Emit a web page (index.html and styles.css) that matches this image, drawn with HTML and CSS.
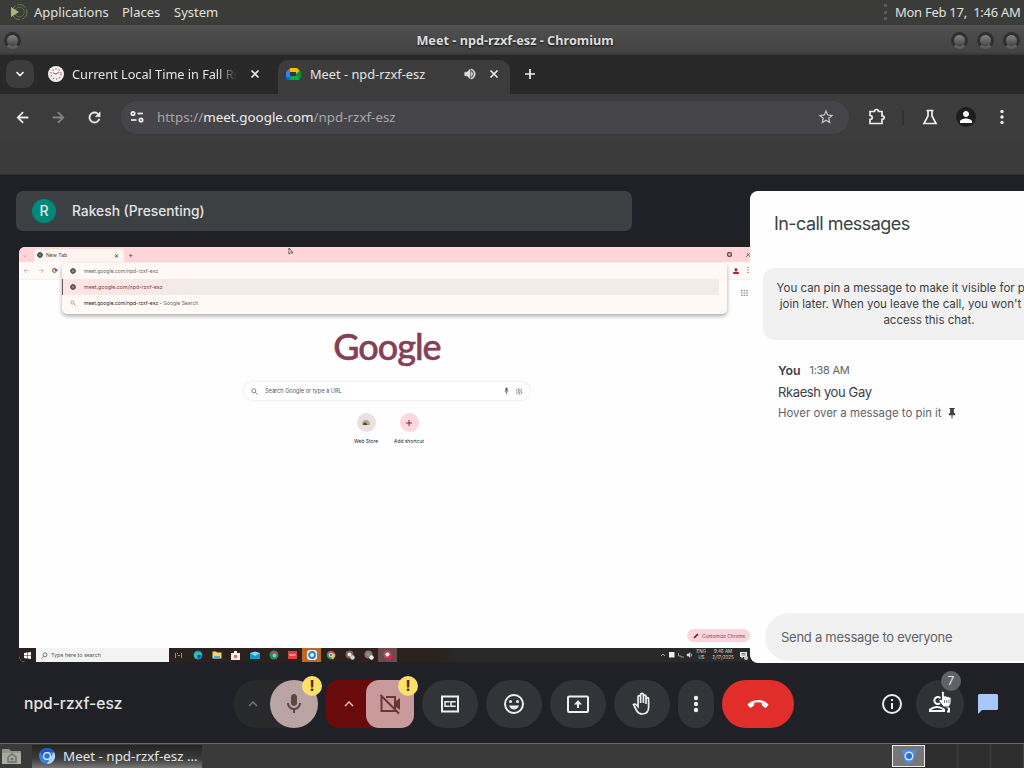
FILE: index.html
```html
<!DOCTYPE html>
<html lang="en">
<head>
    <meta charset="utf-8">
    <title>Meet - npd-rzxf-esz</title>
    <link rel="stylesheet" href="styles.css">
</head>
<body>

<!-- desktop panel -->
<div class="panel">
    <svg class="menu-logo" width="20" height="20" viewBox="0 0 20 20"><circle cx="10.500" cy="10" r="7.500" fill="none" stroke="#6d8148" stroke-dasharray="9 2"/><circle cx="10.500" cy="10" r="4.800" fill="none" stroke="#5c6e40"/><path d="M2 5v10l8-5z" fill="#a9b878"/></svg>
    <span class="apps">Applications</span>
    <span class="places">Places</span>
    <span class="system">System</span>
    <span class="grip"></span>
    <span class="clock">Mon Feb 17,&nbsp; 1:46 AM</span>
</div>

<div class="titlebar">
    <span class="knob"></span>
    <span class="window-title"><b>Meet - npd-rzxf-esz - Chromium</b></span>
    <span class="knob"></span>
    <span class="knob"></span>
    <span class="knob"></span>
</div>

<div class="tabstrip">
    <div class="tab-search"><svg width="12" height="12" viewBox="0 0 12 12"><path d="M2.500 4l3.500 3.500L9.500 4" class="line"/></svg></div>
    <div class="tab">
        <svg width="16" height="16" viewBox="0 0 16 16"><circle cx="8" cy="8" r="8" fill="#f4f2f2"/><circle cx="8" cy="8" r="5" fill="none" stroke="#a86b6b" stroke-width="1.500" stroke-dasharray="1.200 2"/><path d="M8 8l3-2M8 8L5 7" stroke="#c44" /></svg>
        <span class="tab-title faded">Current Local Time in Fall Ri</span>
        <svg class="close" width="10" height="10" viewBox="0 0 10 10"><path d="M1.500 1.500l7 7M8.500 1.500l-7 7" class="line"/></svg>
    </div>
    <div class="tab active">
        <svg width="16" height="16" viewBox="0 0 16 16"><path d="M0 6l4-4v4z" fill="#ea4335"/><path d="M4 2h7l2 2v3l-3 1V6H4z" fill="#fbbc04"/><path d="M0 6h4v5H0z" fill="#2684fc"/><path d="M0 11h4v3H2q-2 0-2-2z" fill="#0066da"/><path d="M4 10h6V8l3 2v4H4z" fill="#00ac47"/><path d="M4 6h6v4H4z" fill="#24384a"/><path d="M10 8l5-4v9l-5-4z" fill="#0c8a3a"/></svg>
        <span class="tab-title">Meet - npd-rzxf-esz</span>
        <svg width="14" height="14" viewBox="0 0 24 24" fill="#ddd" stroke="#ddd"><path d="M3 9v6h4l5 5V4L7 9H3zm13.500 3c0-1.770-1.020-3.290-2.500-4.030v8.050c1.480-.730 2.500-2.250 2.500-4.020zM14 3.230v2.060c2.890.860 5 3.540 5 6.710s-2.110 5.850-5 6.710v2.060c4.010-.910 7-4.490 7-8.770s-2.990-7.860-7-8.770z"/></svg>
        <svg class="close" width="10" height="10" viewBox="0 0 10 10"><path d="M1.500 1.500l7 7M8.500 1.500l-7 7" class="line"/></svg>
    </div>
    <svg class="new-tab" width="12" height="12" viewBox="0 0 12 12"><path d="M6 1v10M1 6h10" class="line"/></svg>
</div>

<div class="toolbar">
    <svg class="nav" viewBox="0 0 24 24"><path d="M20 11H7.830l5.590-5.590L12 4l-8 8 8 8 1.410-1.410L7.830 13H20v-2z"/></svg>
    <svg class="nav dim flip" viewBox="0 0 24 24"><path d="M20 11H7.830l5.590-5.590L12 4l-8 8 8 8 1.410-1.410L7.830 13H20v-2z"/></svg>
    <svg class="nav" viewBox="0 0 24 24"><path d="M17.650 6.350C16.200 4.900 14.210 4 12 4c-4.420 0-7.990 3.580-7.990 8s3.570 8 7.990 8c3.730 0 6.840-2.550 7.730-6h-2.080c-.820 2.330-3.040 4-5.650 4-3.310 0-6-2.690-6-6s2.690-6 6-6c1.660 0 3.140.690 4.220 1.780L13 11h7V4l-2.350 2.350z"/></svg>
    <div class="omnibox">
        <svg width="16" height="16" viewBox="0 0 16 16"><g class="line"><circle cx="4" cy="4.500" r="1.700"/><path d="M8.500 4.500H14"/><circle cx="12" cy="11" r="1.700"/><path d="M2 11h5.500"/></g></svg>
        <span class="url">https://<em>meet.google.com</em>/npd-rzxf-esz</span>
        <svg width="18" height="18" viewBox="0 0 24 24" fill="#c7c7ca"><path d="M22 9.240l-7.190-.620L12 2 9.190 8.630 2 9.240l5.460 4.730L5.820 21 12 17.270 18.180 21l-1.630-7.030L22 9.240zM12 15.400l-3.760 2.270 1-4.280-3.320-2.880 4.380-.380L12 6.100l1.710 4.040 4.380.380-3.320 2.880 1 4.280L12 15.400z"/></svg>
    </div>
    <svg class="puzzle" width="20" height="20" viewBox="0 0 20 20"><path d="M3 4.500h4.500q0-2 2-2t2 2H15v4.300q2.200 0 2.200 1.800T15 12.400v4.100H3v-4q2.300-.2 2.300-2T3 8.500z" class="line"/></svg>
    <span class="divider"></span>
    <svg class="flask" width="18" height="18" viewBox="0 0 18 18"><path d="M5.500 2.500h7M7 3v5L3 15.500h12L11 8V3" class="line"/></svg>
    <span class="profile"><svg width="18" height="18" viewBox="0 0 24 24" fill="#fff"><path d="M12 12c2.210 0 4-1.790 4-4s-1.790-4-4-4-4 1.790-4 4 1.790 4 4 4zm0 2c-2.670 0-8 1.340-8 4v2h16v-2c0-2.660-5.330-4-8-4z"/></svg></span>
    <svg width="4" height="16" viewBox="0 0 4 16" fill="#eee"><circle cx="2" cy="2.500" r="1.700"/><circle cx="2" cy="8" r="1.700"/><circle cx="2" cy="13.500" r="1.700"/></svg>
</div>
<div class="infobar"></div>

<div class="meet">
    <div class="stage">
        <div class="presenter"><span class="avatar">R</span><span>Rakesh (Presenting)</span></div>

        <!-- shared screen -->
        <div class="screen">
            <div class="s-tabs">
                <span class="s-down">⌄</span>
                <div class="s-tab">
                    <svg width="6" height="6" viewBox="0 0 6 6"><circle cx="3" cy="3" r="2.300" fill="#777" stroke="#222"/></svg>
                    <span>New Tab</span><i>×</i>
                </div>
                <span class="s-plus">+</span>
                <svg class="s-max" width="5" height="5" viewBox="0 0 5 5"><path d="M.8.8h3.400v3.400H.8z" fill="none" stroke="#511"/></svg>
                <svg width="5" height="6" viewBox="0 0 5 6"><path d="M1 5l4-4M2 1l3 4" stroke="#844" stroke-width=".8"/></svg>
            </div>
            <div class="s-bar">
                <span>←</span><span>→</span><b>⟳</b>
                <svg class="s-user" width="6" height="6" viewBox="0 0 6 6" fill="#b3223d"><circle cx="3" cy="1.600" r="1.500"/><path d="M0 6V4.500Q3 2.500 6 4.500V6z"/></svg>
                <svg class="s-more" width="2" height="7" viewBox="0 0 2 7"><path d="M1 0v7" stroke="#b3223d" stroke-dasharray="1 1.500"/></svg>
            </div>
            <div class="s-drop">
                <div><svg width="6" height="6" viewBox="0 0 6 6"><circle cx="3" cy="3" r="2.300" fill="#888" stroke="#222"/></svg><span class="s-u1">meet.google.com/npd-rzxf-esz</span></div>
                <div class="sel"><svg width="6" height="6" viewBox="0 0 6 6"><circle cx="3" cy="3" r="2.300" fill="#888" stroke="#222"/></svg><span class="s-u2">meet.google.com/npd-rzxf-esz</span></div>
                <div><svg width="6" height="6" viewBox="0 0 6 6"><circle cx="2.400" cy="2.400" r="1.600" fill="none" stroke="#888" stroke-width=".7"/><path d="M3.600 3.600L5.600 5.600" stroke="#888" stroke-width=".7"/></svg><span class="s-u3">meet.google.com/npd-rzxf-esz - <small>Google Search</small></span></div>
            </div>
            <svg class="s-grid" width="7" height="6" viewBox="0 0 7 6"><path d="M0 .7h7M0 3h7M0 5.300h7" stroke="#777" stroke-dasharray="1.600 1"/></svg>
            <svg class="s-cursor" width="6" height="9" viewBox="0 0 6 9"><path d="M1 1v6l1.500-1.200L5 6z" fill="#fff" stroke="#333" stroke-width=".8"/></svg>

            <div class="s-page">
                <div class="s-logo">Google</div>
                <div class="s-search">
                    <svg width="7" height="7" viewBox="0 0 7 7"><circle cx="2.800" cy="2.800" r="2" class="thin"/><path d="M4.300 4.300L6.500 6.500" class="thin"/></svg>
                    <span>Search Google or type a URL</span>
                    <svg width="5" height="8" viewBox="0 0 5 8"><rect x="1.500" y=".5" width="2" height="4" rx="1" fill="#555"/><path d="M.5 4Q2.500 7 4.500 4M2.500 5.500v2" class="thin"/></svg>
                    <svg width="7" height="7" viewBox="0 0 7 7"><rect x=".7" y="1" width="5" height="5" rx="1" class="thin" stroke-dasharray="2 1"/><circle cx="3.300" cy="3.500" r="1" class="thin"/></svg>
                </div>
                <div class="s-links">
                    <div><span class="s-dot store"><svg width="10" height="7" viewBox="0 0 10 7"><path d="M1 6Q1 1 5 1t4 5z" fill="#b9a67c"/><path d="M2 6Q3 2 5 4t1 2z" fill="#444"/></svg></span>Web Store</div>
                    <div><span class="s-dot"><svg width="8" height="8" viewBox="0 0 8 8"><path d="M4 1v6M1 4h6" stroke="#712f40"/></svg></span>Add shortcut</div>
                </div>
                <div class="s-custom"><svg width="6" height="6" viewBox="0 0 6 6"><path d="M1 5L5 1" stroke="#612" stroke-width="1.600"/></svg><span>Customize Chrome</span></div>
            </div>

            <div class="s-taskbar">
                <svg class="win" width="7" height="7" viewBox="0 0 7 7" fill="#fff"><path d="M0 1l3-.5v2.700H0zM3.500.5L7 0v3.200H3.500zM0 3.700h3v2.800L0 6zM3.500 3.700H7V7l-3.500-.5z"/></svg>
                <div class="s-find"><svg width="7" height="7" viewBox="0 0 7 7"><circle cx="4" cy="2.800" r="2" class="thin"/><path d="M2.600 4.300L.8 6.500" class="thin"/></svg><span>Type here to search</span></div>
                <div class="s-apps">
                    <span><svg width="7" height="7" viewBox="0 0 7 7"><path d="M.5 1v5M2.500 1v1M2.500 3.500H5M6.500 1v5" stroke="#bbb" stroke-width=".7"/></svg></span>
                    <span><svg width="10" height="10" viewBox="0 0 10 10"><circle cx="5" cy="5" r="4.500" fill="#1688c9"/><path d="M1 6q0-4 4-4 3.500 0 4 3H5q-2 1 0 3.500Q2 9 1 6z" fill="#35c6a0"/><circle cx="6" cy="6" r="1.500" fill="#0b4a7d"/></svg></span>
                    <span><svg width="10" height="8" viewBox="0 0 10 8"><path d="M.5.5H4l1 1h4.500v6h-9z" fill="#f5d36b"/><path d="M2 5h6v2.500H2z" fill="#5aa7db"/></svg></span>
                    <span><svg width="9" height="9" viewBox="0 0 9 9"><path d="M0 2h9v7H0zM3 0h3v2H3z" fill="#eee"/><path d="M3 4h3v3H3z" fill="#c77"/></svg></span>
                    <span><svg width="10" height="8" viewBox="0 0 10 8"><path d="M0 2h10v6H0z" fill="#1795d4"/><path d="M0 2l5 3 5-3L5 .5z" fill="#7fd5f8"/></svg></span>
                    <span><svg width="10" height="10" viewBox="0 0 10 10"><circle cx="5" cy="5" r="4.500" fill="#248a5b"/><path d="M1 3q4-4 8 0L6 4z" fill="#bb4a42"/><circle cx="5.500" cy="5.500" r="2" fill="#8fb7d9"/></svg></span>
                    <span><svg width="9" height="8" viewBox="0 0 9 8"><path d="M0 0h9v8H0z" fill="#e43d42"/><path d="M1.500 3l1.500 2 1.500-2L6 5l1.500-2" stroke="#fff" fill="none" stroke-width=".7"/></svg></span>
                    <span class="orange"><svg width="10" height="10" viewBox="0 0 10 10"><rect width="10" height="10" rx="3" fill="#e9f5ff"/><circle cx="5" cy="5" r="3" fill="none" stroke="#1683d8" stroke-width="1.800"/></svg></span>
                    <span><svg width="10" height="10" viewBox="0 0 10 10"><circle cx="5" cy="5" r="4.300" fill="#31964e"/><path d="M1 3q4-4 8 0H5z" fill="#d6493d"/><path d="M9 3.500q1 4-3 6L5 5z" fill="#edc13d"/><circle cx="5" cy="5" r="1.900" fill="#4a8cdf" stroke="#fff" stroke-width=".7"/></svg></span>
                    <span><svg width="10" height="10" viewBox="0 0 10 10"><circle cx="4.500" cy="4.500" r="4" fill="#8d5e55"/><circle cx="4.500" cy="4.500" r="2" fill="#e8e8ee"/><circle cx="7.500" cy="7.500" r="2.200" fill="#d4d4d9"/></svg></span>
                    <span><svg width="10" height="10" viewBox="0 0 10 10"><circle cx="4.500" cy="4.500" r="4" fill="#a06b58"/><circle cx="4.500" cy="4.500" r="2" fill="#5e9ac2"/><circle cx="7.500" cy="7.500" r="2.200" fill="#eee"/></svg></span>
                    <span class="lit"><svg width="10" height="10" viewBox="0 0 10 10"><circle cx="4.500" cy="4.500" r="4" fill="#b44c57"/><circle cx="4.500" cy="4.500" r="2" fill="#eee"/><circle cx="7.500" cy="7.500" r="2.200" fill="#e31e4a"/></svg></span>
                </div>
                <div class="s-tray">
                    <svg width="32" height="8" viewBox="0 0 32 8"><path d="M0 5l2-2 2 2" fill="none" stroke="#bbb" stroke-width=".8"/><path d="M8 1h5.500v5.500H8z" fill="#eee"/><path d="M17.500 2v3H20v1h3" fill="none" stroke="#999"/><path d="M26 3h1.500L29 1.500v5L27.500 5H26zM30 2.500q1.500 1.500 0 3" fill="#ddd" stroke="#ccc" stroke-width=".5"/></svg>
                    <span class="s-lang">ENG<br>US</span>
                    <span class="s-time">9:46 AM<br>2/17/2025</span>
                    <svg width="8" height="9" viewBox="0 0 8 9"><path d="M0 1h7v5H3L1.500 8V6H0z" fill="#eee"/><path d="M1.500 2.500h4M1.500 4h4" stroke="#222" stroke-width=".6"/><circle cx="6" cy="7" r="2" fill="#ccc"/></svg>
                </div>
            </div>
        </div>
    </div>

    <div class="chat">
        <h1>In-call messages</h1>
        <div class="notice">You can pin a message to make it visible for people who<br>join later. When you leave the call, you won't be able to<br>access this chat.</div>
        <div class="message">
            <div class="from"><b>You</b><span>1:38 AM</span></div>
            <p>Rkaesh you Gay</p>
            <div class="hint"><span>Hover over a message to pin it</span><svg width="8" height="11" viewBox="0 0 8 12"><path d="M1 0h6v1.200H6V5l1.500 1.500V8h-3v3.500h-1V8h-3V6.500L2 5V1.200H1z" fill="#3c4043"/></svg></div>
        </div>
        <div class="compose">Send a message to everyone</div>
    </div>
</div>

<div class="controls">
    <span class="code">npd-rzxf-esz</span>
    <div class="group mic">
        <svg class="chev" width="10" height="10" viewBox="0 0 10 10"><path d="M1 7l4-4 4 4"/></svg>
        <div class="device"><svg width="24" height="24" viewBox="0 0 24 24" fill="#604543"><path d="M12 14c1.660 0 3-1.340 3-3V5c0-1.660-1.340-3-3-3S9 3.340 9 5v6c0 1.660 1.340 3 3 3z"/><path d="M17 11c0 2.760-2.240 5-5 5s-5-2.240-5-5H5c0 3.530 2.610 6.430 6 6.920V21h2v-3.080c3.390-.490 6-3.390 6-6.920h-2z"/></svg></div>
        <span class="alert">!</span>
    </div>
    <div class="group cam">
        <svg class="chev" width="10" height="10" viewBox="0 0 10 10"><path d="M1 7l4-4 4 4"/></svg>
        <div class="device"><svg width="24" height="24" viewBox="0 0 24 24" fill="none" stroke="#693735" stroke-width="2"><path d="M8 5h9v13M3.500 5v14H17v-1M2.500 3L21 21.500"/><path d="M17.500 10.500L21 8v8l-3.500-2.500z" fill="#693735"/></svg></div>
        <span class="alert">!</span>
    </div>
    <div class="btn"><svg width="24" height="24" viewBox="0 0 24 24"><rect x="4" y="4.500" width="16" height="15" /><path d="M11 10.500V9.700H7v4.600h4v-.8M17 10.500V9.700h-4v4.600h4v-.8" stroke-width="1.500"/></svg></div>
    <div class="btn"><svg width="24" height="24" viewBox="0 0 24 24"><circle cx="12" cy="12" r="9"/><circle cx="8.500" cy="9.500" r="1.500" class="solid"/><circle cx="15.500" cy="9.500" r="1.500" class="solid"/><path d="M7 13.500h10q-1.500 4-5 4t-5-4z" class="solid"/></svg></div>
    <div class="btn"><svg width="24" height="24" viewBox="0 0 24 24"><rect x="2" y="4.500" width="20" height="15.500" rx="1"/><path d="M12 16v-4" /><path d="M8 12.500L12 8l4 4.500z" class="solid"/></svg></div>
    <div class="btn"><svg width="24" height="24" viewBox="0 0 24 24"><path d="M8 14V5q0-1.400 1.300-1.400T10.600 5v6V2.800q0-1.400 1.400-1.400t1.400 1.400V11 4.500q0-1.300 1.300-1.300T16 4.500V12 7q0-1.300 1.300-1.300T18.600 7v8q0 7-6.300 7-4 0-6-4L3.500 12.500q1.700-1.500 4.500 2z" stroke-width="1.700"/></svg></div>
    <div class="btn more"><svg width="24" height="24" viewBox="0 0 24 24"><circle cx="12" cy="6" r="2.200" class="solid"/><circle cx="12" cy="12" r="2.200" class="solid"/><circle cx="12" cy="18" r="2.200" class="solid"/></svg></div>
    <div class="btn end"><svg width="24" height="24" viewBox="0 0 24 24"><path class="phone" d="M12 8q6 0 10 4 .8.800 0 1.600l-1.800 1.800q-.7.700-1.500.1l-2.300-1.700q-.6-.5-.6-1.300v-1.700q-3.800-1-7.600 0v1.700q0 .8-.6 1.300l-2.300 1.700q-.8.600-1.500-.1L2 13.600q-.8-.8 0-1.600 4-4 10-4z"/></svg></div>

    <div class="side">
        <svg width="24" height="24" viewBox="0 0 24 24" fill="none" stroke="#eee" stroke-width="2"><circle cx="12" cy="12" r="9"/><path d="M12 11v6M12 7v2"/></svg>
        <div class="people">
            <svg width="24" height="24" viewBox="0 0 24 24" fill="none" stroke="#fff" stroke-width="2"><path d="M12.500 6.200A3.500 3.500 0 1 0 12.500 10.800"/><path d="M2 19v-1.500Q9 12.500 16 17.500V19z"/><path d="M17 14q4 1 4 3v2.500h-2"/></svg>
            <span class="count">7</span>
            <svg class="pointer" width="16" height="18" viewBox="0 0 16 18"><path d="M4.500 10V2.500q0-1.500 1.400-1.500t1.400 1.500V6q2-.7 2.500.5 1.800-.6 2.300.6 2-.2 2 1.400V12q0 2-1.500 3.500v1.500H6.500L2.200 11.500q-1-1.700.4-2 .9-.2 1.900.5z" fill="#fff" stroke="#333"/><path d="M7.500 10v3M9.700 10v3M11.900 10v3" stroke="#555" stroke-width=".8"/></svg>
        </div>
        <svg width="24" height="24" viewBox="0 0 24 24" fill="#a8c7fa"><path d="M20.500 2h-17Q2 2 2 3.500V22l4-4h14.500q1.500 0 1.500-1.500v-13Q22 2 20.500 2z"/></svg>
    </div>
</div>

<!-- window list -->
<div class="taskbar">
    <svg class="folder" width="20" height="18" viewBox="0 0 20 18"><path d="M0 2h7l2 2h10v13H0z" fill="#92968a"/><path d="M0 6h19v11H0z" fill="#a9aca0"/><path d="M6 10l4-3 4 3v5H6z" fill="none" stroke="#6e7168" stroke-width="1.500"/><circle cx="10" cy="12" r="1.500" fill="#6e7168"/></svg>
    <div class="task">
        <svg width="16" height="16" viewBox="0 0 16 16"><circle cx="8" cy="8" r="8" fill="#3f7fe0"/><path d="M8 0a8 8 0 0 1 7 4H8L5 10 1 4Q4 0 8 0z" fill="#2559b8"/><path d="M15 4a8 8 0 0 1-7 12l4-7z" fill="#b4d4fb"/><circle cx="8" cy="8" r="4" fill="#e9f2fe"/><circle cx="8" cy="8" r="2.800" fill="#2c70de"/></svg>
        <span>Meet - npd-rzxf-esz …</span>
    </div>
    <div class="pager">
        <span class="current"><svg width="18" height="16" viewBox="0 0 18 16"><path d="M1 2h16l-4 11-5 3q-5-3-4-7z" fill="#4b8ce6"/><circle cx="9" cy="8" r="4.500" fill="#d9e8fb"/><circle cx="9" cy="8" r="3" fill="#2a6cd6"/></svg></span>
        <span></span><span></span><span></span>
    </div>
</div>

</body>
</html>
```
FILE: styles.css
```css
* {
    box-sizing: border-box;
}

body {
    margin: 0;
    width: 1024px;
    height: 768px;
    overflow: hidden;
    display: flex;
    flex-direction: column;
    background: #202126;
    font-family: "Noto Sans", sans-serif;
    color: #e4e4e4;
    white-space: nowrap;
}

svg {
    display: block;
    flex: none;
}

.line {
    fill: none;
    stroke: #eee;
    stroke-width: 1.7;
}

.thin {
    fill: none;
    stroke: #666;
    stroke-width: .8;
}

/* desktop panel */
.panel {
    flex: none;
    height: 25px;
    display: flex;
    align-items: center;
    padding: 0 4px 2px 9px;
    background: #3b3b39;
    font-size: 13px;
    color: #e0e0de;
}

.apps {
    width: 88px;
    margin-left: 5px;
    font-size: 13px;
}

.places {
    width: 52px;
}

.grip {
    width: 4px;
    height: 16px;
    margin-left: auto;
    margin-right: 7px;
    border-left: 3px dotted #5b5b59;
}

.clock {
    width: 125px;
    letter-spacing: -.27px;
}

.titlebar {
    flex: none;
    height: 30px;
    display: flex;
    align-items: center;
    gap: 9px;
    padding: 0 4px;
    background: linear-gradient(#555 0, #4d4d4d 20%, #434343 90%, #333);
}

.window-title {
    flex: 1;
    padding-left: 58px;
    text-align: center;
    font-size: 12.7px;
    color: #ddd;
    text-shadow: 0 1px 2px #111;
}

.knob {
    width: 17px;
    height: 17px;
    border-radius: 50%;
    border: 3px solid #303030;
    border-bottom-color: #5c5f5c;
    background: linear-gradient(#858585, #444);
}

/* browser */
.tabstrip {
    flex: none;
    height: 39px;
    display: flex;
    align-items: flex-end;
    padding-left: 6px;
    background: #282828;
}

.tab-search {
    width: 28px;
    height: 28px;
    margin-bottom: 6px;
    border-radius: 9px;
    background: #3c3c3c;
    display: flex;
    align-items: center;
    justify-content: center;
}

.tab {
    height: 34px;
    width: 230px;
    margin-left: 6px;
    padding: 0 10px 6px 8px;
    display: flex;
    align-items: center;
    font-size: 12.8px;
}

.tab-title {
    width: 167px;
    margin-left: 8px;
    overflow: hidden;
}

.faded {
    letter-spacing: -.05px;
    -webkit-mask-image: linear-gradient(90deg, #000 88%, transparent);
    mask-image: linear-gradient(90deg, #000 88%, transparent);
}

.tab .close {
    margin-left: 13px;
}

.tab.active {
    position: relative;
    width: 232px;
    margin-left: 8px;
    border-radius: 10px 10px 0 0;
    background: #3c3c3c;
}

.active .tab-title {
    width: 153px;
}

.active .close {
    margin-left: 12px;
}

.new-tab {
    margin: 0 0 14px 14px;
}

.toolbar {
    flex: none;
    height: 47px;
    display: flex;
    align-items: center;
    padding: 0 20px 1px 14px;
    background: #3c3c3c;
}

.nav {
    width: 17px;
    height: 17px;
    margin-right: 19px;
    fill: #eee;
    stroke: #eee;
    stroke-width: .6;
}

.nav.dim {
    fill: #858585;
    stroke: #858585;
}

.flip {
    transform: scaleX(-1);
}

.omnibox {
    width: 729px;
    height: 33px;
    margin-left: -1px;
    padding: 0 14px 0 8px;
    border-radius: 17px;
    background: #454549;
    display: flex;
    align-items: center;
}

.url {
    flex: 1;
    margin-left: 12px;
    font-size: 13.4px;
    color: #a5a5a8;
}

.url em {
    font-style: normal;
    color: #eee;
}

.puzzle {
    margin-left: 18px;
}

.divider {
    width: 2px;
    height: 15px;
    margin: 0 17px 0 15px;
    background: #303030;
}

.profile {
    width: 20px;
    height: 20px;
    margin: 0 24px 0 17px;
    border-radius: 50%;
    background: #1e1e1e;
    display: flex;
    align-items: center;
    justify-content: center;
}

.infobar {
    flex: none;
    height: 34px;
    background: #3b3b3b;
    border-bottom: 1px solid #303034;
}

/* meet */
.meet {
    flex: none;
    height: 488px;
    display: flex;
    padding: 16px 0 0 16px;
    overflow: hidden;
    font-family: Inter, Roboto, sans-serif;
}

.stage {
    flex: none;
    width: 734px;
}

.presenter {
    width: 616px;
    height: 40px;
    padding-left: 16px;
    border-radius: 7px;
    background: #3c4043;
    display: flex;
    align-items: center;
    gap: 16px;
    font-size: 13.8px;
    font-weight: 500;
}

.avatar {
    width: 24px;
    height: 24px;
    border-radius: 50%;
    background: #00897b;
    text-align: center;
    line-height: 24px;
    font-size: 14px;
}

.screen {
    position: relative;
    width: 731px;
    height: 415px;
    margin: 16px 0 0 3px;
    border-radius: 6px 0 0 6px;
    overflow: hidden;
    display: flex;
    flex-direction: column;
    background: #fefefe;
    color: #444;
    font-size: 5.1px;
}

.s-tabs {
    height: 15px;
    display: flex;
    align-items: center;
    background: #ffd5d9;
    padding-left: 4px;
}

.s-down {
    width: 11px;
    color: #a67;
}

.s-tab {
    width: 90px;
    height: 13px;
    margin-top: 2px;
    padding: 0 5px 2px 3px;
    border-radius: 4px 4px 0 0;
    background: #fff5f0;
    display: flex;
    align-items: center;
    gap: 3px;
}

.s-tab i {
    margin-left: auto;
    font-style: normal;
    font-size: 8px;
}

.s-plus {
    margin-left: 4px;
    font-size: 8px;
}

.s-max {
    margin: 0 13px 0 auto;
}

.s-bar {
    height: 18px;
    display: flex;
    align-items: center;
    gap: 8px;
    padding: 0 1px 0 4px;
    background: #fffaf7;
    border-bottom: 1px solid #f8eeee;
    font-size: 7px;
    color: #b6a6a6;
}

.s-bar b {
    color: #555;
}

.s-user {
    margin-left: auto;
}

.s-drop {
    position: absolute;
    left: 43px;
    top: 16px;
    width: 665px;
    height: 51px;
    border-radius: 5px;
    background: #fff9f5;
    box-shadow: 0 2px 4px #aaa;
}

.s-drop div {
    height: 16px;
    display: flex;
    align-items: center;
    padding-left: 8px;
    gap: 8px;
}

.s-drop .sel {
    margin-right: 8px;
    padding-left: 7px;
    border-left: 1px solid #725259;
    background: linear-gradient(90deg, #fde4e2, #f3ebe8 20%);
}

.s-u1 {
    color: #666;
    font-size: 5px;
}

.s-u2 {
    color: #8e3545;
    font-size: 5.3px;
}

.s-u3 {
    color: #222;
    font-size: 5px;
}

.s-u3 small {
    font-size: 5px;
    color: #666;
}

.s-grid {
    position: absolute;
    left: 722px;
    top: 43px;
}

.s-cursor {
    position: absolute;
    left: 269px;
    top: 0;
}

.s-page {
    flex: 1;
    display: flex;
    flex-direction: column;
    align-items: center;
}

.s-logo {
    margin: 42px 0 0 5px;
    height: 59px;
    line-height: 48px;
    font-family: Lato, sans-serif;
    font-size: 36px;
    font-weight: 500;
    letter-spacing: -1px;
    -webkit-text-stroke: .5px #854055;
    color: #854055;
}

.s-search {
    width: 286px;
    height: 18px;
    margin: 1px 0 0 5px;
    padding: 0 7px;
    border-radius: 9px;
    background: #fff;
    box-shadow: 0 0 3px #ddd;
    display: flex;
    align-items: center;
    gap: 7px;
}

.s-search span {
    flex: 1;
    color: #555;
    font-size: 5.6px;
}

.s-links {
    display: flex;
    margin: 13px 0 0 6px;
    gap: 1px;
    color: #222;
    font-size: 4.9px;
    text-align: center;
}

.s-links div {
    width: 42px;
}

.s-dot {
    width: 19px;
    height: 19px;
    margin: 0 auto 6px;
    border-radius: 50%;
    background: #ffd6dc;
    display: flex;
    align-items: center;
    justify-content: center;
}

.s-dot.store {
    background: #eadfe1;
}

.s-custom {
    width: 63px;
    height: 13px;
    margin: auto 0 6px auto;
    padding-left: 6px;
    border-radius: 7px;
    background: #fbd5da;
    color: #8b4454;
    display: flex;
    align-items: center;
    gap: 3px;
    font-size: 4.8px;
}

.s-taskbar {
    flex: none;
    height: 14px;
    display: flex;
    align-items: center;
    background: linear-gradient(90deg, #2b221f 0, #2b221f 58%, #292929 60%);
}

.win {
    margin: 0 5px;
}

.s-find {
    width: 133px;
    height: 14px;
    padding-left: 5px;
    background: #f3f3f3;
    display: flex;
    align-items: center;
    gap: 3px;
    color: #555;
    font-size: 5.3px;
}

.s-apps {
    display: flex;
}

.s-apps span {
    width: 19px;
    height: 14px;
    display: flex;
    align-items: center;
    justify-content: center;
}

.s-apps .orange {
    background: #b96b25;
}

.s-apps .lit {
    background: #694b4d;
}

.s-tray {
    margin-left: auto;
    padding-right: 2px;
    display: flex;
    align-items: center;
    gap: 4px;
    color: #ddd;
    text-align: center;
    font-size: 4.5px;
    line-height: 6px;
}

.s-time {
    width: 26px;
}

.chat {
    flex: none;
    width: 358px;
    height: 472px;
    display: flex;
    flex-direction: column;
    border-radius: 8px 0 0 8px;
    background: #fefefe;
    color: #3c4043;
    overflow: hidden;
}

.chat h1 {
    margin: 20px 0 0 24px;
    height: 57px;
    line-height: 25px;
    font-size: 18px;
    font-weight: 400;
    letter-spacing: -.55px;
}

.notice {
    width: 332px;
    height: 72px;
    margin-left: 13px;
    padding-top: 12px;
    border-radius: 12px;
    background: #f1f1f1;
    text-align: center;
    font-size: 11.5px;
    line-height: 16px;
}

.message {
    margin: 21px 0 0 28px;
}

.from {
    display: flex;
    align-items: center;
    gap: 9px;
    height: 18px;
    font-size: 12.3px;
}

.from b {
    font-weight: 600;
}

.from span {
    font-size: 11px;
    color: #5f6368;
    letter-spacing: -.3px;
}

.message p {
    margin: 4px 0;
    font-size: 13px;
    letter-spacing: -.38px;
    line-height: 18px;
}

.hint {
    display: flex;
    align-items: center;
    gap: 6px;
    height: 16px;
    font-size: 11.4px;
    color: #5f6368;
}

.compose {
    height: 48px;
    margin: auto 16px 2px 15px;
    padding-left: 16px;
    border-radius: 24px;
    background: #f1f1f2;
    line-height: 48px;
    font-size: 13px;
    letter-spacing: -.26px;
    color: #5f6368;
}

/* call controls */
.controls {
    flex: none;
    height: 80px;
    display: flex;
    align-items: center;
    gap: 8px;
    padding: 1px 24px 0 24px;
    font-family: Inter, Roboto, sans-serif;
}

.code {
    width: 201px;
    font-size: 15.6px;
    font-weight: 500;
}

.group {
    position: relative;
    height: 48px;
    display: flex;
    align-items: center;
}

.mic {
    width: 85px;
    border-radius: 24px;
    background: #28292b;
}

.cam {
    width: 88px;
    border-radius: 13px;
    background: #690b0d;
}

.chev {
    margin: 0 12px 0 auto;
    fill: none;
    stroke: #777;
    stroke-width: 1.4;
}

.cam .chev {
    stroke: #f4c8c5;
}

.device {
    width: 48px;
    height: 48px;
    border-radius: 50%;
    background: #b8a5a4;
    display: flex;
    align-items: center;
    justify-content: center;
}

.cam .device {
    border-radius: 13px;
    background: #c99a9b;
}

.alert {
    position: absolute;
    right: -4px;
    top: -4px;
    width: 20px;
    height: 20px;
    border-radius: 50%;
    background: #fddf6b;
    color: #3b2d00;
    text-align: center;
    font-size: 15px;
    font-weight: 700;
    line-height: 20px;
}

.btn {
    width: 56px;
    height: 48px;
    border-radius: 24px;
    background: #333437;
    display: flex;
    align-items: center;
    justify-content: center;
    fill: none;
    stroke: #eee;
    stroke-width: 2;
}

.solid {
    fill: #eee;
    stroke: none;
}

.phone {
    fill: #fff;
    stroke: none;
}

.btn.more {
    width: 36px;
    border-radius: 18px;
}

.btn.end {
    width: 72px;
    background: #e22e2a;
}

.side {
    margin-left: auto;
    display: flex;
    align-items: center;
    gap: 12px;
}

.people {
    position: relative;
    width: 48px;
    height: 48px;
    border-radius: 50%;
    background: #313236;
    display: flex;
    align-items: center;
    justify-content: center;
}

.count {
    position: absolute;
    left: 25px;
    top: -9px;
    width: 20px;
    height: 20px;
    border-radius: 50%;
    background: #5f6368;
    text-align: center;
    font-size: 12px;
    line-height: 20px;
}

.pointer {
    position: absolute;
    left: 21px;
    top: 10px;
}

/* window list */
.taskbar {
    flex: none;
    height: 25px;
    display: flex;
    align-items: center;
    border-top: 1px solid #666;
    background: #3a3a3a;
}

.folder {
    margin: 0 10px 0 2px;
}

.task {
    width: 170px;
    height: 23px;
    padding: 0 7px;
    display: flex;
    align-items: center;
    gap: 8px;
    background: linear-gradient(#242424, #3b3b3b 60%, #777);
    font-size: 13.4px;
}

.pager {
    margin-left: auto;
    height: 24px;
    display: flex;
    align-items: center;
    background: #2e2e2e;
}

.pager span {
    width: 33px;
    height: 24px;
    border-right: 1px solid #444;
}

.pager .current {
    height: 22px;
    border: 1px solid #eee;
    background: #777;
    display: flex;
    align-items: center;
    justify-content: center;
}
```
